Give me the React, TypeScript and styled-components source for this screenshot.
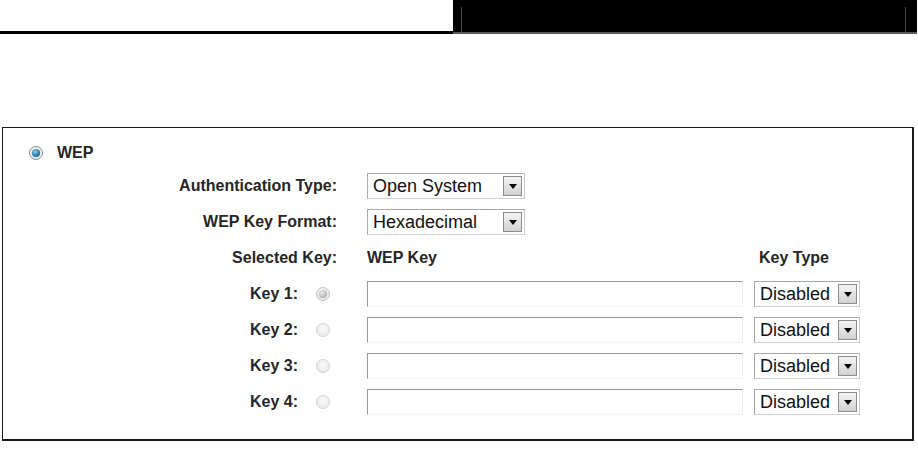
import React from "react";
import styled, { createGlobalStyle } from "styled-components";

const Global = createGlobalStyle`
  html, body { margin: 0; padding: 0; background: #fff; }
  body { font-family: "Liberation Sans", Arial, sans-serif; color: #222; }
`;

const Page = styled.div`
  width: 918px;
  height: 457px;
  overflow: hidden;
`;

const Header = styled.div`
  display: flex;
  height: 34px;
`;

const HeaderRule = styled.div`
  flex: 0 0 453px;
  border-bottom: 3px solid #000;
  box-sizing: border-box;
`;

const HeaderBlock = styled.div`
  flex: 0 0 464px;
  background: #000;
  border-bottom: 2px solid #5a5a5a;
  box-sizing: border-box;
  padding: 7px 11px 0 8px;
  display: flex;
`;

const HeaderInner = styled.div`
  flex: 1;
  border-left: 1px solid #4a4a4a;
  border-right: 1px solid #4a4a4a;
`;

const Panel = styled.div`
  margin: 93px 0 0 2px;
  width: 912px;
  height: 314px;
  box-sizing: border-box;
  border: 1px solid #1a1a1a;
  border-right-width: 2px;
  border-bottom-width: 2px;
  padding-top: 10px;
`;

const TopRow = styled.div`
  display: flex;
  align-items: center;
  height: 30px;
  padding-left: 26px;
  gap: 14px;
`;

const Form = styled.div`
  display: grid;
  grid-template-columns: 364px 387px 106px;
  grid-auto-rows: 36px;
  align-items: center;
  & > * { min-width: 0; }
`;

const Label = styled.div<{ $pad?: number }>`
  font-weight: bold;
  font-size: 16px;
  color: #262626;
  text-align: right;
  display: flex;
  justify-content: flex-end;
  align-items: center;
  gap: 18px;
  padding-right: ${(p) => 30 + (p.$pad ?? 0)}px;
`;

const Heading = styled.div<{ $indent?: number }>`
  font-weight: bold;
  font-size: 16px;
  color: #262626;
  padding-left: ${(p) => p.$indent ?? 0}px;
`;

const Field = styled.div`
  display: flex;
  align-items: center;
`;

const Cell = styled.div`
  display: flex;
  align-items: center;
  grid-column: 2 / span 2;
`;

type Tone = "blue" | "gray" | "off";

const RadioOuter = styled.span<{ $tone: Tone }>`
  width: 14px;
  height: 14px;
  border-radius: 50%;
  box-sizing: border-box;
  display: inline-flex;
  align-items: center;
  justify-content: center;
  border: 1px solid ${(p) => (p.$tone === "blue" ? "#8a9099" : p.$tone === "gray" ? "#c2c2c2" : "#d4d4d4")};
  background: ${(p) =>
    p.$tone === "off"
      ? "radial-gradient(circle at 50% 40%, #fafafa, #e4e4e4)"
      : "radial-gradient(circle at 50% 40%, #ffffff, #dcdcdc)"};
  flex: 0 0 auto;
`;

const RadioDot = styled.span<{ $tone: "blue" | "gray" }>`
  width: 8px;
  height: 8px;
  border-radius: 50%;
  background: ${(p) =>
    p.$tone === "blue"
      ? "radial-gradient(circle at 40% 35%, #8fd0f0, #2a7fb0 55%, #0f4a70)"
      : "radial-gradient(circle at 40% 35%, #f0f0f0, #b8b8b8 60%, #9a9a9a)"};
`;

const Radio = ({ tone }: { tone: Tone }) => (
  <RadioOuter $tone={tone}>{tone !== "off" && <RadioDot $tone={tone} />}</RadioOuter>
);

const WepLabel = styled.span`
  font-weight: bold;
  font-size: 16px;
  color: #262626;
`;

const SelectBox = styled.div<{ $w: number }>`
  width: ${(p) => p.$w}px;
  height: 26px;
  box-sizing: border-box;
  border: 1px solid #a9a9a9;
  border-right-color: #c8c8c8;
  border-bottom-color: #d0d0d0;
  background: #fff;
  display: flex;
  align-items: center;
  justify-content: space-between;
  padding: 0 2px 0 5px;
  font-size: 18px;
  color: #111;
`;

const SelectText = styled.span`
  white-space: nowrap;
`;

const ArrowBtn = styled.span`
  width: 19px;
  height: 20px;
  box-sizing: border-box;
  border: 1px solid #8c8c8c;
  background: linear-gradient(#f3f3f3, #d2d2d2);
  display: flex;
  align-items: center;
  justify-content: center;
  flex: 0 0 auto;
  &::after {
    content: "";
    border-left: 4px solid transparent;
    border-right: 4px solid transparent;
    border-top: 5px solid #000;
    margin-top: 1px;
  }
`;

const Select = ({ value, width }: { value: string; width: number }) => (
  <SelectBox $w={width}>
    <SelectText>{value}</SelectText>
    <ArrowBtn />
  </SelectBox>
);

const TextInput = styled.div`
  width: 376px;
  height: 26px;
  box-sizing: border-box;
  border-top: 1px solid #9a9a9a;
  border-left: 1px solid #9a9a9a;
  border-right: 1px solid #eeeeee;
  border-bottom: 1px solid #f2f2f2;
  background: #fff;
`;

const keys = [1, 2, 3, 4];

export default function App() {
  return (
    <Page>
      <Global />
      <Header>
        <HeaderRule />
        <HeaderBlock>
          <HeaderInner />
        </HeaderBlock>
      </Header>
      <Panel>
        <TopRow>
          <Radio tone="blue" />
          <WepLabel>WEP</WepLabel>
        </TopRow>
        <Form>
          <Label>Authentication Type:</Label>
          <Cell>
            <Select value="Open System" width={158} />
          </Cell>

          <Label>WEP Key Format:</Label>
          <Cell>
            <Select value="Hexadecimal" width={158} />
          </Cell>

          <Label>Selected Key:</Label>
          <Heading>WEP Key</Heading>
          <Heading $indent={5}>Key Type</Heading>

          {keys.map((k) => (
            <React.Fragment key={k}>
              <Label $pad={7}>
                <span>Key {k}:</span>
                <Radio tone={k === 1 ? "gray" : "off"} />
              </Label>
              <Field>
                <TextInput />
              </Field>
              <Field>
                <Select value="Disabled" width={106} />
              </Field>
            </React.Fragment>
          ))}
        </Form>
      </Panel>
    </Page>
  );
}
